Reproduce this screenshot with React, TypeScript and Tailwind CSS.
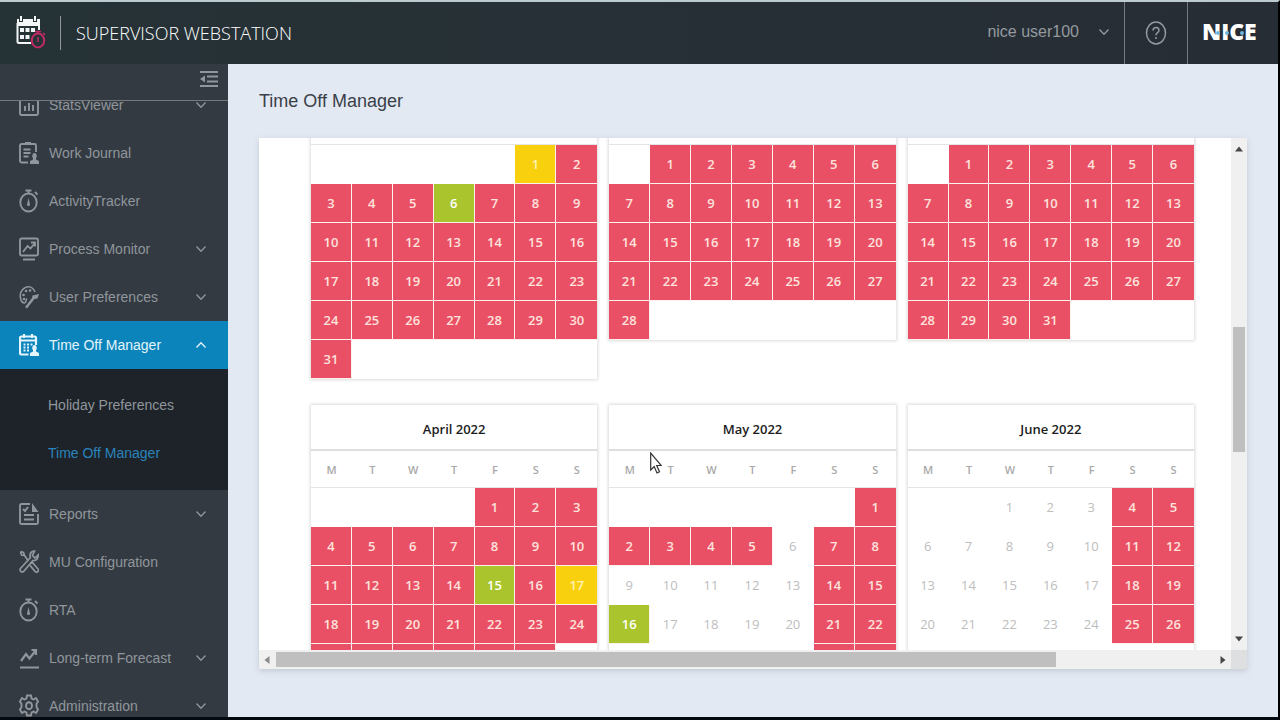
import React from 'react'
import { clsx } from 'clsx'

type IconName =
  | 'stats'
  | 'journal'
  | 'stopwatch'
  | 'monitor'
  | 'palette'
  | 'calendar'
  | 'report'
  | 'tools'
  | 'forecast'
  | 'gear'

interface NavItem {
  label: string
  icon: IconName
  expandable?: boolean
  children?: string[]
}

interface Month {
  title: string
  offset: number
  days: number
  open?: number[]
  approved?: number[]
  pending?: number[]
}

const navItems: NavItem[] = [
  { label: 'StatsViewer', icon: 'stats', expandable: true },
  { label: 'Work Journal', icon: 'journal' },
  { label: 'ActivityTracker', icon: 'stopwatch' },
  { label: 'Process Monitor', icon: 'monitor', expandable: true },
  { label: 'User Preferences', icon: 'palette', expandable: true },
  {
    label: 'Time Off Manager',
    icon: 'calendar',
    expandable: true,
    children: ['Holiday Preferences', 'Time Off Manager'],
  },
  { label: 'Reports', icon: 'report', expandable: true },
  { label: 'MU Configuration', icon: 'tools' },
  { label: 'RTA', icon: 'stopwatch' },
  { label: 'Long-term Forecast', icon: 'forecast', expandable: true },
  { label: 'Administration', icon: 'gear', expandable: true },
]

const months: Month[] = [
  { title: 'January 2022', offset: 5, days: 31, approved: [6], pending: [1] },
  { title: 'February 2022', offset: 1, days: 28 },
  { title: 'March 2022', offset: 1, days: 31 },
  { title: 'April 2022', offset: 4, days: 30, approved: [15], pending: [17] },
  {
    title: 'May 2022',
    offset: 6,
    days: 31,
    approved: [16],
    open: [6, 9, 10, 11, 12, 13, 17, 18, 19, 20, 23, 24, 25, 26, 27, 30, 31],
  },
  {
    title: 'June 2022',
    offset: 2,
    days: 30,
    open: [1, 2, 3, 6, 7, 8, 9, 10, 13, 14, 15, 16, 17, 20, 21, 22, 23, 24, 27, 28, 29, 30],
  },
]

const weekdays = ['M', 'T', 'W', 'T', 'F', 'S', 'S']

const iconPaths: Record<IconName, React.ReactNode> = {
  stats: (
    <>
      <rect x="1" y="2" width="18" height="20" rx="1.5" />
      <path d="M6 13v5M10 10v8M14 12v6" />
    </>
  ),
  journal: (
    <>
      <path d="M6 3H2.500Q1 3 1 4.500V20Q1 21.500 2.500 21.500H9M12 3h3.500Q17 3 17 4.500V11" />
      <path d="M6 2.500h6" strokeWidth="3" />
      <path d="M4.500 8.500h7M4.500 12h7M4.500 15.500h5" />
      <path d="M15.500 12a2.500 3 0 0 1 1.500 5.200v1.300l3 1.500v3H11v-3l3-1.500v-1.300A2.500 3 0 0 1 15.500 12z" fill="currentColor" stroke="none" />
    </>
  ),
  stopwatch: (
    <>
      <ellipse cx="9.500" cy="13.500" rx="8.200" ry="9" />
      <path d="M6.500 1.500h6M9.500 1.500V4M16 3l2.500 2.500" />
      <path d="M9.500 9l1.500 6.500a1.500 1.500 0 0 1-3 0z" fill="currentColor" stroke="none" />
    </>
  ),
  monitor: (
    <>
      <rect x="1" y="1.500" width="18" height="17" rx="1.500" />
      <path d="M4 15l4.500-6 3 2.500L16 6M12 5.500h4v4M4 22.500h12" />
    </>
  ),
  palette: (
    <>
      <path d="M16 7C14.500 3 11 1 7.500 2 3 3.500.500 8 1.500 13c.600 3 2.500 5 4 5 2 0 1-3 2.500-4.500" strokeWidth="1.600" />
      <path d="M7 6h.1M11 5.500h.1M4.500 10h.1M5 14h.1" strokeWidth="2.600" strokeLinecap="round" />
      <path d="M20 9l-1.500 4.500-3 .5L8 23.500 6 22l7-9 .500-2.500z" fill="currentColor" stroke="none" />
    </>
  ),
  calendar: (
    <>
      <path d="M9.500 21.500H2.500Q1 21.500 1 20V5Q1 3.500 2.500 3.500h13Q17 3.500 17 5v7M1 7.500h16M5 1v4M13 1v4" strokeWidth="2.200" />
      <path d="M4.500 11.500h2M8 11.500h2M11.500 11.500h2M4.500 14.500h2M8 14.500h2M4.500 17.500h2M8 17.500h2" />
      <path d="M15.500 12a2.500 3 0 0 1 1.500 5.200v1.300l3 1.500v3H11v-3l3-1.500v-1.300A2.500 3 0 0 1 15.500 12z" fill="currentColor" stroke="none" />
    </>
  ),
  report: (
    <>
      <path d="M11 2H2.500Q1 2 1 3.500v17Q1 22 2.500 22h15q1.500 0 1.500-1.500V12M5 13h10M5 17.500h10M4 7l2 2 3-4" />
      <path d="M13 1l6.500 9H13z" fill="currentColor" stroke="none" />
    </>
  ),
  tools: (
    <g strokeWidth="1.700">
      <path d="M1.500 1.500l3 1 1 3L9.500 11M1.500 1.500l1 3.500 3 .500" />
      <path d="M11.500 13.500l1.500-1.500 6 7q1 1.500-.300 2.700-1.400 1-2.700-.300l-5-6" />
      <path d="M15.500 1.200q-3.500 0-4.300 3 -.400 1.700.200 3.300L1.500 18.500q-1 1.500.200 2.800 1.500 1.300 3 0L14 10.500q5 .500 5.200-5.500L16 8l-2.500-2.500z" />
    </g>
  ),
  forecast: <path d="M1 21.500h19M2 15l5-7 3.500 4.500L17 4M12.500 4H17v5" strokeWidth="2.200" />,
  gear: (
    <>
      <path d="M8 1.500h4l.600 3 2 1 2.400-1.500 2 3.500-1.500 2.500v3l1.500 2.500-2 3.500-2.400-1.500-2 1-.600 3H8l-.600-3-2-1L3 19l-2-3.500L2.500 13v-3L1 7.500 3 4l2.400 1.500 2-1z" />
      <ellipse cx="10" cy="11.700" rx="3" ry="3.500" />
    </>
  ),
}

function NavIcon({ name }: { name: IconName }) {
  return (
    <svg viewBox="0 0 20 24" className="h-6 w-5 shrink-0" fill="none" stroke="currentColor" strokeWidth="1.900" aria-hidden="true">
      {iconPaths[name]}
    </svg>
  )
}

function Chevron({ up }: { up?: boolean }) {
  return (
    <svg viewBox="0 0 10 6" className="h-[6px] w-[10px]" fill="none" stroke="currentColor" strokeWidth="1.300" aria-hidden="true">
      <path d={up ? 'M.5 5.500L5 .7l4.500 4.800' : 'M.5.500L5 5.300 9.500.500'} />
    </svg>
  )
}

function Header() {
  return (
    <header className="flex h-[62px] shrink-0 bg-linear-to-r from-[#253236] to-[#272d35] text-[#949a9f]">
      <div className="flex flex-1 items-center pl-4">
        <svg viewBox="0 0 30 36" className="h-9 w-[30px]" fill="none" aria-hidden="true">
          <path d="M1 4h23v7H1z" fill="#f3f6f7" />
          <path d="M5 1v6M19 1v6" stroke="#253236" strokeWidth="4" />
          <path d="M5 1v5M19 1v5" stroke="#f3f6f7" strokeWidth="2" />
          <path d="M1.500 8v18.500q0 1.500 1.500 1.500h12M23 8v7" stroke="#f3f6f7" strokeWidth="2" />
          <path d="M4 15h4M9.500 15h4M15 15h4M4 22h4M9.500 22h4" stroke="#f3f6f7" strokeWidth="4" />
          <ellipse cx="22" cy="25.500" rx="6.200" ry="7" fill="#253236" stroke="#c02a66" strokeWidth="2" />
          <path d="M19 16.500h6M22 16v3M27 18l2 2M22 22v5" stroke="#c02a66" strokeWidth="1.600" />
        </svg>
        <span className="ml-3.5 h-[34px] w-px bg-[#8f989b]" />
        <h1 className="ml-[15px] font-['Open_Sans',sans-serif] text-[18px] font-light text-white">SUPERVISOR WEBSTATION</h1>
      </div>
      <button className="flex items-center gap-5 pr-[15px] pb-0.5 text-[16px]">
        nice user100
        <Chevron />
      </button>
      <button aria-label="Help" className="flex w-16 items-center justify-center border-x border-[#737a80]">
        <svg viewBox="0 0 22 24" className="h-6 w-[22px]" fill="none" stroke="currentColor" strokeWidth="1.500" aria-hidden="true">
          <ellipse cx="11" cy="12" rx="9.500" ry="11" />
          <path d="M8 9.500q.200-3 3-3t3 2.700q0 1.600-1.700 2.600Q11 12.600 11 14.300M11 16v2" />
        </svg>
      </button>
      <div className="flex w-[90px] items-center pb-1 pl-3.5">
        <span className="relative font-['Open_Sans',sans-serif] text-[23px] font-extrabold text-white">
          NICE
          <span className="absolute top-1/2 left-[14px] size-1 rounded-full bg-[#6db5dc]" />
          <span className="absolute top-1/2 left-[23px] size-1 rounded-full bg-[#6db5dc]" />
          <span className="absolute top-1/2 left-[38px] size-1 rounded-full bg-[#6db5dc]" />
        </span>
      </div>
    </header>
  )
}

function Sidebar() {
  return (
    <aside className="flex w-[228px] shrink-0 flex-col bg-[#333a42] text-[#90969b]">
      <div className="flex h-[37px] shrink-0 items-center justify-end border-b border-[#747a80] pr-2.5 pb-1.5">
        <button aria-label="Collapse menu">
          <svg viewBox="0 0 18 18" className="size-[18px]" fill="none" stroke="currentColor" strokeWidth="2" aria-hidden="true">
            <path d="M0 2h18M7 6.500h11M7 11.500h11M0 16h18" />
            <path d="M5 5.500v7L0 9z" fill="currentColor" stroke="none" />
          </svg>
        </button>
      </div>
      <nav className="min-h-0 flex-1 overflow-hidden text-[14px]">
        <ul className="-mt-5">
          {navItems.map((item) => (
            <li key={item.label}>
              <a
                href="#"
                className={clsx('flex h-12 items-center gap-2.5 pr-[22px] pl-[19px]', item.children && 'bg-[#0b84bc] text-[#e3f4fb]')}
              >
                <NavIcon name={item.icon} />
                <span className="flex-1">{item.label}</span>
                {item.expandable && <Chevron up={!!item.children} />}
              </a>
              {item.children && (
                <ul className="bg-[#1d2329] pt-3 pb-[13px]">
                  {item.children.map((child, i) => (
                    <li key={child}>
                      <a href="#" className={clsx('flex h-12 items-center pl-12', i === 1 && 'text-[#2b83bd]')}>
                        {child}
                      </a>
                    </li>
                  ))}
                </ul>
              )}
            </li>
          ))}
        </ul>
      </nav>
    </aside>
  )
}

function MonthCard({ month }: { month: Month }) {
  const weeks = Array.from({ length: Math.ceil((month.offset + month.days) / 7) }, (_, w) =>
    weekdays.map((_, d) => w * 7 + d - month.offset + 1)
  )

  const dayColor = (day: number) => {
    if (day < 1 || day > month.days) return 'border-white'
    if (month.open?.includes(day)) return 'border-white text-[#bdbdbd]'
    if (month.approved?.includes(day)) return 'border-[#fdf1ee] bg-[#a9c42d] font-semibold text-white'
    if (month.pending?.includes(day)) return 'border-[#fdf1ee] bg-[#f9d00e] font-semibold text-[#fff3b5]'
    return 'border-[#fdf1ee] bg-[#ea5065] font-semibold text-[#fde3dd]'
  }

  return (
    <table className="w-full table-fixed border-separate border-spacing-0 bg-white text-center text-[13px] shadow-[0_0_3px_1px_#dcdcdc]">
      <caption className="h-[46px] border-b-2 border-[#dedede] bg-white pt-0.5 text-[13px] leading-[44px] font-semibold text-[#1c1c1c] shadow-[0_0_3px_1px_#dcdcdc]">
        {month.title}
      </caption>
      <thead>
        <tr>
          {weekdays.map((day, i) => (
            <th key={i} className="h-[37px] border-b border-[#e4e4e4] bg-white p-0 pt-0.5 text-[11px] font-semibold text-[#a9a9a9]">
              {day}
            </th>
          ))}
        </tr>
      </thead>
      <tbody>
        {weeks.map((week, w) => (
          <tr key={w}>
            {week.map((day) => (
              <td key={day} className={clsx('h-[39px] border-r border-b p-0 pt-0.5 last:border-r-0', dayColor(day))}>
                {day > 0 && day <= month.days ? day : ''}
              </td>
            ))}
          </tr>
        ))}
      </tbody>
    </table>
  )
}

function Arrow({ className }: { className?: string }) {
  return (
    <svg viewBox="0 0 8 8" className={clsx('size-2', className)} fill="currentColor" aria-hidden="true">
      <path d="M0 6.500L4 1.500l4 5z" />
    </svg>
  )
}

function CalendarPanel() {
  return (
    <section className="flex min-h-0 flex-1 flex-col bg-white shadow-[0_2px_6px_#c3c9d2]">
      <div className="flex min-h-0 flex-1">
        <div className="min-w-0 flex-1 overflow-hidden pr-[37px] pl-[52px] font-['Open_Sans',sans-serif]">
          <div className="-mt-[76px] grid grid-cols-3 items-start gap-x-3 gap-y-[26px]">
            {months.map((month) => (
              <MonthCard key={month.title} month={month} />
            ))}
          </div>
        </div>
        <div className="flex w-4 shrink-0 flex-col items-center bg-[#f0f0f0] py-[7px] text-[#474747]">
          <Arrow />
          <div className="flex w-full flex-1 flex-col px-0.5">
            <div className="flex-[174]" />
            <div className="flex-[124] bg-[#bfbfbf]" />
            <div className="flex-[183]" />
          </div>
          <Arrow className="rotate-180" />
        </div>
      </div>
      <div className="flex h-[19px] shrink-0 bg-[#f0f0f0] text-[#474747]">
        <div className="flex min-w-0 flex-1 items-center px-1">
          <Arrow className="-rotate-90 text-[#8a8a8a]" />
          <div className="flex h-[15px] flex-1 pl-[5px]">
            <div className="flex-[778] bg-[#bfbfbf]" />
            <div className="flex-[163]" />
          </div>
          <Arrow className="rotate-90" />
        </div>
        <div className="w-4 bg-[#dedfe1]" />
      </div>
    </section>
  )
}

export default function App() {
  return (
    <div className="flex h-screen flex-col overflow-hidden border-t-2 border-r-2 border-b-3 border-t-[#bccbd0] border-r-black border-b-[#03090f] bg-[#e2e9f3] font-['Liberation_Sans',sans-serif]">
      <Header />
      <div className="flex min-h-0 flex-1">
        <Sidebar />
        <main className="flex min-w-0 flex-1 flex-col px-[31px] pb-12">
          <h2 className="flex h-[74px] shrink-0 items-center text-[18px] text-[#3a4048]">Time Off Manager</h2>
          <CalendarPanel />
        </main>
      </div>
      <svg viewBox="0 0 12 22" className="fixed top-[452px] left-[650px] h-[22px] w-3" aria-hidden="true">
        <path d="M.7 1v17l3.500-3.500 2.800 6.500 2.500-1.200L6.700 13.500h4.600z" fill="#fff" stroke="#333" strokeWidth="1.200" />
      </svg>
    </div>
  )
}
